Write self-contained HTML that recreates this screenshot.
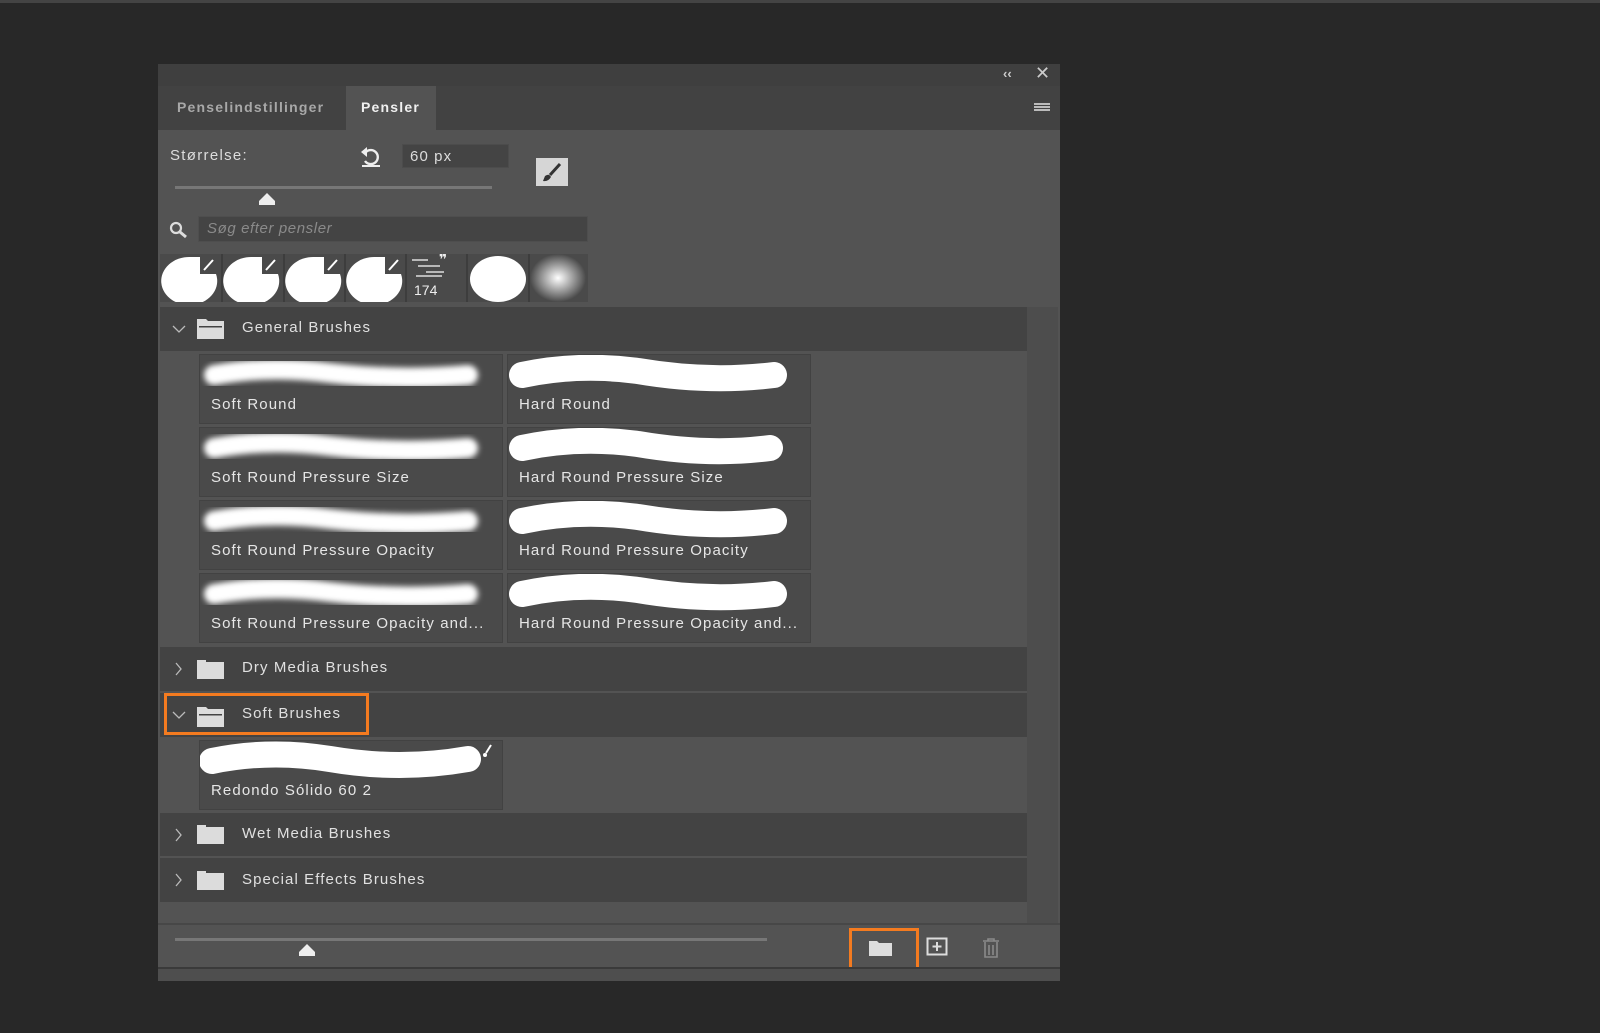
<!DOCTYPE html>
<html><head><meta charset="utf-8"><style>
*{margin:0;padding:0;box-sizing:border-box}
body{width:1600px;height:1033px;background:#282828;position:relative;overflow:hidden;font-family:"Liberation Sans","DejaVu Sans",sans-serif;color:#d8d8d8}
.a{position:absolute}
.t{font-size:15px;letter-spacing:1.1px;color:#e0e0e0;white-space:nowrap}
.hdr{position:absolute;left:160px;width:867px;background:#434343}
.cell{position:absolute;width:304px;background:#4a4a4a;border:1px solid #424242}
.cell span{position:absolute;left:11px;bottom:10px;font-size:15px;letter-spacing:1.1px;color:#e6e6e6;white-space:nowrap}
.cell svg{position:absolute;left:0;top:0}
</style></head><body>
<div class="a" style="left:0;top:0;width:1600px;height:3px;background:#444"></div>
<div class="a" style="left:158px;top:64px;width:902px;height:917px;background:#535353"></div>
<div class="a" style="left:158px;top:64px;width:902px;height:22px;background:#3f3f3f"></div>
<div class="a t" style="left:1003px;top:66px;font-size:13px;color:#ccc;font-weight:bold;letter-spacing:0">‹‹</div>
<div class="a t" style="left:1035px;top:63px;font-size:18px;color:#ccc;font-weight:bold;letter-spacing:0">✕</div>
<div class="a" style="left:158px;top:86px;width:902px;height:44px;background:#424242"></div>
<div class="a" style="left:346px;top:86px;width:90px;height:44px;background:#535353"></div>
<div class="a t" style="left:177px;top:99px;font-weight:bold;color:#a8a8a8;font-size:14px;letter-spacing:1.2px">Penselindstillinger</div>
<div class="a t" style="left:361px;top:99px;font-weight:bold;color:#f0f0f0;font-size:14px;letter-spacing:1.2px">Pensler</div>
<div class="a" style="left:1034px;top:103px;width:16px;height:2px;background:#bbb;box-shadow:0 3px 0 #bbb,0 6px 0 #bbb"></div>
<div class="a t" style="left:170px;top:147px;color:#ddd;letter-spacing:1.3px">Størrelse:</div>
<svg class="a" style="left:358px;top:146px" width="26" height="22" viewBox="0 0 26 22"><path d="M8 6 A7 7 0 1 1 7 15" fill="none" stroke="#eee" stroke-width="2.4"/><path d="M3 6 L9 1 L9 11 Z" fill="#eee"/><rect x="4" y="19" width="18" height="2" fill="#eee"/></svg>
<div class="a" style="left:402px;top:144px;width:107px;height:24px;background:#444;border:1px solid #4c4c4c"></div>
<div class="a t" style="left:410px;top:148px;color:#ddd">60 px</div>
<div class="a" style="left:536px;top:158px;width:32px;height:28px;background:#d6d6d6"></div>
<svg class="a" style="left:536px;top:158px" width="32" height="28"><path d="M24 6 L14 17" stroke="#333" stroke-width="3"/><path d="M9 18 Q13 15 15 19 Q12 24 7 23 Z" fill="#333"/></svg>
<div class="a" style="left:175px;top:186px;width:317px;height:3px;background:#777"></div>
<svg class="a" style="left:257px;top:191px" width="20" height="16"><path d="M2 14 L2 10 L10 2 L18 10 L18 14 Z" fill="#eee"/></svg>
<svg class="a" style="left:169px;top:221px" width="20" height="18"><circle cx="7" cy="7" r="5" fill="none" stroke="#ddd" stroke-width="2.2"/><path d="M11 11 L17 16" stroke="#ddd" stroke-width="3"/></svg>
<div class="a" style="left:198px;top:216px;width:390px;height:26px;background:#444;border:1px solid #4e4e4e"></div>
<div class="a t" style="left:207px;top:220px;color:#8a8a8a;font-style:italic;letter-spacing:0.6px">Søg efter pensler</div>
<div class="a" style="left:160px;top:254px;width:428px;height:48px;background:#4a4a4a"></div>
<svg class="a" style="left:160px;top:254px" width="430" height="48">
<defs><radialGradient id="g"><stop offset="0" stop-color="#fff"/><stop offset="1" stop-color="#4a4a4a"/></radialGradient></defs>
<g stroke="#3d3d3d" stroke-width="2"><path d="M62 0V48M124 0V48M185 0V48M246 0V48M307 0V48M369 0V48"/></g>
<g fill="#fff">
<path d="M30 3 A28 24 0 1 0 56 20 L40 20 L40 3 Z"/><path d="M92 3 A28 24 0 1 0 118 20 L102 20 L102 3 Z"/><path d="M154 3 A28 24 0 1 0 180 20 L164 20 L164 3 Z"/><path d="M215 3 A28 24 0 1 0 241 20 L225 20 L225 3 Z"/>
<ellipse cx="338" cy="25" rx="28" ry="23"/></g>
<g stroke="#fff" stroke-width="2"><path d="M44 16 L53 6M106 16 L115 6M168 16 L177 6M229 16 L238 6"/></g>
<g stroke="#ddd" stroke-width="1.5"><path d="M252 6h16M258 12h22M266 18h18M256 22h26"/></g>
<text x="279" y="10" fill="#eee" font-size="14" font-weight="bold">❞</text>
<text x="254" y="41" fill="#eee" font-size="14" font-family="Liberation Sans">174</text>
<ellipse cx="398" cy="24" rx="28" ry="24" fill="url(#g)"/>
</svg>
<div class="a" style="left:1027px;top:307px;width:31px;height:616px;background:#4d4d4d"></div>
<div class="hdr" style="top:307px;height:44px"></div>
<div class="hdr" style="top:647px;height:44px"></div>
<div class="hdr" style="top:693px;height:44px"></div>
<div class="hdr" style="top:813px;height:43px"></div>
<div class="hdr" style="top:858px;height:44px"></div>
<svg class="a" style="left:170px;top:300px" width="70" height="620">
<g fill="none" stroke="#bbb" stroke-width="1.3"><path d="M3 26 L9 32 L15 26"/><path d="M3 412 L9 418 L15 412"/><path d="M6 363 L11 369 L6 375"/><path d="M6 529 L11 535 L6 541"/><path d="M6 574 L11 580 L6 586"/></g>
<g fill="#dcdcdc">
<path d="M27 19h9l2 2h16v18h-27z"/><path d="M27 407h9l2 2h16v18h-27z"/>
<rect x="27" y="362" width="27" height="17"/><rect x="27" y="360" width="9" height="2"/>
<rect x="27" y="527" width="27" height="17"/><rect x="27" y="525" width="9" height="2"/>
<rect x="27" y="573" width="27" height="17"/><rect x="27" y="571" width="9" height="2"/>
</g>
<g fill="#434343"><rect x="29" y="26" width="23" height="1.5"/><rect x="29" y="414" width="23" height="1.5"/></g>
</svg>
<div class="a t" style="left:242px;top:319px">General Brushes</div>
<div class="a t" style="left:242px;top:659px">Dry Media Brushes</div>
<div class="a t" style="left:242px;top:705px">Soft Brushes</div>
<div class="a t" style="left:242px;top:825px">Wet Media Brushes</div>
<div class="a t" style="left:242px;top:871px">Special Effects Brushes</div>
<svg width="0" height="0" style="position:absolute"><defs><filter id="b" x="-20%" y="-100%" width="140%" height="300%"><feGaussianBlur stdDeviation="3"/></filter></defs></svg>
<div class="cell" style="left:199px;top:354px;height:70px"><svg width="304" height="45"><path d="M14 20 Q70 10 130 18 Q200 26 268 20" stroke="#fff" stroke-width="20" stroke-linecap="round" fill="none" filter="url(#b)"/></svg><span>Soft Round</span></div>
<div class="cell" style="left:507px;top:354px;height:70px"><svg width="304" height="45"><path d="M14 20 Q70 8 130 16 Q200 28 266 20" stroke="#fff" stroke-width="26" stroke-linecap="round" fill="none"/></svg><span>Hard Round</span></div>
<div class="cell" style="left:199px;top:427px;height:70px"><svg width="304" height="45"><path d="M14 20 Q70 10 130 18 Q200 26 268 20" stroke="#fff" stroke-width="20" stroke-linecap="round" fill="none" filter="url(#b)"/></svg><span>Soft Round Pressure Size</span></div>
<div class="cell" style="left:507px;top:427px;height:70px"><svg width="304" height="45"><path d="M14 20 Q70 8 130 16 Q200 28 262 20" stroke="#fff" stroke-width="26" stroke-linecap="round" fill="none"/></svg><span>Hard Round Pressure Size</span></div>
<div class="cell" style="left:199px;top:500px;height:70px"><svg width="304" height="45"><path d="M14 20 Q70 10 130 18 Q200 26 268 20" stroke="#fff" stroke-width="20" stroke-linecap="round" fill="none" filter="url(#b)"/></svg><span>Soft Round Pressure Opacity</span></div>
<div class="cell" style="left:507px;top:500px;height:70px"><svg width="304" height="45"><path d="M14 20 Q70 8 130 16 Q200 28 266 20" stroke="#fff" stroke-width="26" stroke-linecap="round" fill="none"/></svg><span>Hard Round Pressure Opacity</span></div>
<div class="cell" style="left:199px;top:573px;height:70px"><svg width="304" height="45"><path d="M14 20 Q70 10 130 18 Q200 26 268 20" stroke="#fff" stroke-width="20" stroke-linecap="round" fill="none" filter="url(#b)"/></svg><span>Soft Round Pressure Opacity and...</span></div>
<div class="cell" style="left:507px;top:573px;height:70px"><svg width="304" height="45"><path d="M14 20 Q70 8 130 16 Q200 28 266 20" stroke="#fff" stroke-width="26" stroke-linecap="round" fill="none"/></svg><span>Hard Round Pressure Opacity and...</span></div>
<div class="cell" style="left:199px;top:740px;height:70px"><svg width="304" height="45"><path d="M12 20 Q70 8 130 18 Q200 30 268 18" stroke="#fff" stroke-width="26" stroke-linecap="round" fill="none"/><path d="M291 4 L286 12" stroke="#fff" stroke-width="2"/><circle cx="285" cy="14" r="2" fill="#fff"/></svg><span>Redondo Sólido 60 2</span></div>
<div class="a" style="left:164px;top:693px;width:205px;height:42px;border:3px solid #f47b20"></div>
<div class="a" style="left:158px;top:923px;width:902px;height:2px;background:#474747"></div>
<div class="a" style="left:175px;top:938px;width:592px;height:3px;background:#777"></div>
<svg class="a" style="left:297px;top:942px" width="20" height="16"><path d="M2 14 L2 10 L10 2 L18 10 L18 14 Z" fill="#eee"/></svg>
<div class="a" style="left:849px;top:928px;width:70px;height:44px;border:3px solid #f47b20"></div>
<svg class="a" style="left:868px;top:938px" width="26" height="20"><path d="M1 3h8l2 2h13v13h-23z" fill="#ddd"/></svg>
<svg class="a" style="left:926px;top:937px" width="22" height="20"><rect x="1.5" y="1.5" width="19" height="16" fill="none" stroke="#ddd" stroke-width="2"/><path d="M11 5v9M6.5 9.5h9" stroke="#ddd" stroke-width="2"/></svg>
<svg class="a" style="left:981px;top:937px" width="20" height="22"><path d="M2 4h16M7 4V2h6v2M4 5v15h12V5M8 8v10M12 8v10" fill="none" stroke="#8a8a8a" stroke-width="1.6"/></svg>
<div class="a" style="left:158px;top:967px;width:902px;height:2px;background:#3a3a3a"></div>
<div class="a" style="left:158px;top:969px;width:902px;height:12px;background:#4e4e4e"></div>
</body></html>
